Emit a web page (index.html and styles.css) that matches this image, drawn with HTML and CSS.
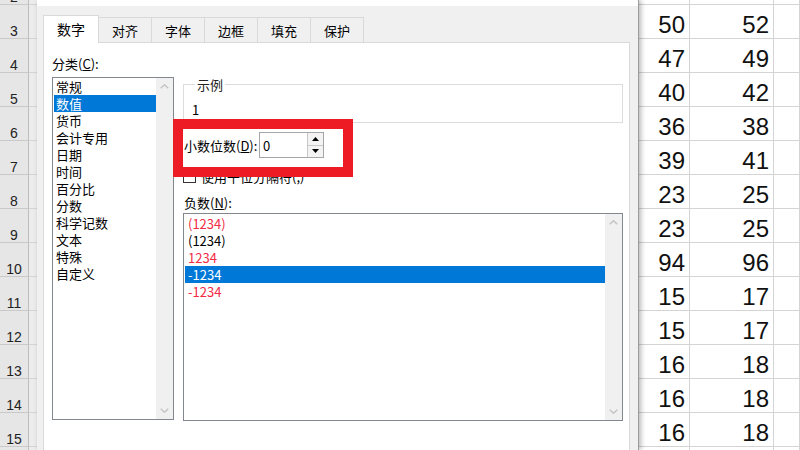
FILE: index.html
```html
<!DOCTYPE html>
<html lang="zh-CN">
<head>
<meta charset="utf-8">
<title>设置单元格格式</title>
<link rel="stylesheet" href="styles.css">
</head>
<body>
<div class="sheet">
  <div class="row"><div class="rh">2</div><div class="c fill"></div><div class="c num"></div><div class="c num"></div><div class="c last"></div></div>
  <div class="row"><div class="rh">3</div><div class="c fill"></div><div class="c num">50</div><div class="c num">52</div><div class="c last"></div></div>
  <div class="row"><div class="rh">4</div><div class="c fill"></div><div class="c num">47</div><div class="c num">49</div><div class="c last"></div></div>
  <div class="row"><div class="rh">5</div><div class="c fill"></div><div class="c num">40</div><div class="c num">42</div><div class="c last"></div></div>
  <div class="row"><div class="rh">6</div><div class="c fill"></div><div class="c num">36</div><div class="c num">38</div><div class="c last"></div></div>
  <div class="row"><div class="rh">7</div><div class="c fill"></div><div class="c num">39</div><div class="c num">41</div><div class="c last"></div></div>
  <div class="row"><div class="rh">8</div><div class="c fill"></div><div class="c num">23</div><div class="c num">25</div><div class="c last"></div></div>
  <div class="row"><div class="rh">9</div><div class="c fill"></div><div class="c num">23</div><div class="c num">25</div><div class="c last"></div></div>
  <div class="row"><div class="rh">10</div><div class="c fill"></div><div class="c num">94</div><div class="c num">96</div><div class="c last"></div></div>
  <div class="row"><div class="rh">11</div><div class="c fill"></div><div class="c num">15</div><div class="c num">17</div><div class="c last"></div></div>
  <div class="row"><div class="rh">12</div><div class="c fill"></div><div class="c num">15</div><div class="c num">17</div><div class="c last"></div></div>
  <div class="row"><div class="rh">13</div><div class="c fill"></div><div class="c num">16</div><div class="c num">18</div><div class="c last"></div></div>
  <div class="row"><div class="rh">14</div><div class="c fill"></div><div class="c num">16</div><div class="c num">18</div><div class="c last"></div></div>
  <div class="row"><div class="rh">15</div><div class="c fill"></div><div class="c num">16</div><div class="c num">18</div><div class="c last"></div></div>
  <div class="row"><div class="rh">16</div><div class="c fill"></div><div class="c num">16</div><div class="c num">18</div><div class="c last"></div></div>
</div>

<div class="dialog">
  <div class="titlebar"></div>
  <div class="dlg-body">
    <div class="tabs">
      <div class="tab active">数字</div>
      <div class="tab">对齐</div>
      <div class="tab">字体</div>
      <div class="tab">边框</div>
      <div class="tab">填充</div>
      <div class="tab">保护</div>
    </div>
    <div class="panel">
      <div class="cols">
        <div class="leftcol">
          <div class="lbl">分类(<u>C</u>):</div>
          <div class="listbox cat">
            <ul class="items">
              <li>常规</li>
              <li class="sel">数值</li>
              <li>货币</li>
              <li>会计专用</li>
              <li>日期</li>
              <li>时间</li>
              <li>百分比</li>
              <li>分数</li>
              <li>科学记数</li>
              <li>文本</li>
              <li>特殊</li>
              <li>自定义</li>
            </ul>
            <div class="vscroll">
              <div class="sbtn"><svg width="9" height="5" viewBox="0 0 9 5"><polyline points="0.7,4.3 4.5,0.8 8.3,4.3" fill="none" stroke="#c4c4c4" stroke-width="1.5"/></svg></div>
              <div class="sbtn"><svg width="9" height="5" viewBox="0 0 9 5"><polyline points="0.7,0.7 4.5,4.2 8.3,0.7" fill="none" stroke="#c4c4c4" stroke-width="1.5"/></svg></div>
            </div>
          </div>
        </div>
        <div class="rightcol">
          <fieldset class="sample">
            <legend>示例</legend>
            <div class="sample-val">1</div>
          </fieldset>
          <div class="decimal">
            <span class="dlabel">小数位数(<u>D</u>):</span>
            <div class="spin">
              <span class="spin-val">0</span>
              <div class="spin-btns">
                <div class="sb"><svg width="7" height="4" viewBox="0 0 7 4"><polygon points="0,4 3.5,0 7,4" fill="#000"/></svg></div>
                <div class="sb"><svg width="7" height="4" viewBox="0 0 7 4"><polygon points="0,0 3.5,4 7,0" fill="#000"/></svg></div>
              </div>
            </div>
          </div>
          <div class="check"><span class="cbox"></span><span>使用千位分隔符(<u>,</u>)</span></div>
          <div class="lbl neg-lbl">负数(<u>N</u>):</div>
          <div class="listbox neg">
            <ul class="items">
              <li class="red">(1234)</li>
              <li>(1234)</li>
              <li class="red">1234</li>
              <li class="sel">-1234</li>
              <li class="red">-1234</li>
            </ul>
            <div class="vscroll">
              <div class="sbtn"><svg width="9" height="5" viewBox="0 0 9 5"><polyline points="0.7,4.3 4.5,0.8 8.3,4.3" fill="none" stroke="#c4c4c4" stroke-width="1.5"/></svg></div>
              <div class="sbtn"><svg width="9" height="5" viewBox="0 0 9 5"><polyline points="0.7,0.7 4.5,4.2 8.3,0.7" fill="none" stroke="#c4c4c4" stroke-width="1.5"/></svg></div>
            </div>
          </div>
        </div>
      </div>
      <p class="desc">数值格式用于一般数字的表示。货币和会计格式则提供货币值计算的专用格式。</p>
    </div>
  </div>
</div>

<div class="mark"></div>
</body>
</html>
```

FILE: styles.css
```css
* { box-sizing: border-box; }
html, body { margin: 0; padding: 0; }
body {
  width: 800px;
  height: 450px;
  overflow: hidden;
  position: relative;
  background: #fff;
  font-family: "Noto Sans CJK SC", "Liberation Sans", sans-serif;
}

/* spreadsheet */
.sheet { margin-top: -29px; }
.row {
  display: grid;
  grid-template-columns: 29px 577px 84px 84px 1fr;
  height: 34px;
}
.rh {
  background: #e6e6e6;
  border-right: 1px solid #bdbdbd;
  border-bottom: 1px solid #c9c9c9;
  font-family: "Liberation Sans", sans-serif;
  font-size: 14px;
  line-height: 14px;
  color: #222;
  text-align: center;
  padding-top: 19px;
}
.c {
  border-right: 1px solid #d4d4d4;
  border-bottom: 1px solid #d4d4d4;
}
.fill { background: #ececec; }
.num {
  font-family: "Liberation Sans", sans-serif;
  font-size: 24px;
  line-height: 24px;
  color: #111;
  text-align: right;
  padding: 8px 4px 0 0;
}

/* dialog */
.dialog {
  position: absolute;
  left: 37px;
  top: 0;
  width: 602px;
  height: 450px;
  overflow: hidden;
  background: #f0f0f0;
  border-right: 1px solid #9c9c9c;
  box-shadow: 2px 0 5px rgba(0, 0, 0, 0.28);
  font-size: 13px;
  color: #000;
}
.titlebar { height: 6px; background: #fff; }
.dlg-body { padding: 9px 0 0 6px; }

.tabs {
  display: flex;
  align-items: flex-end;
  height: 27px;
}
.tab {
  width: 54px;
  height: 25px;
  margin-left: -1px;
  border: 1px solid #d9d9d9;
  border-bottom: none;
  background: #f0f0f0;
  display: flex;
  align-items: center;
  justify-content: center;
  line-height: 17px;
  padding-top: 1px;
}
.tab.active {
  width: 56px;
  height: 28px;
  margin-left: 0;
  margin-bottom: -1px;
  background: #fff;
  position: relative;
  z-index: 1;
  font-size: 14px;
  padding-top: 0;
}

.panel {
  width: 587px;
  height: 420px;
  background: #fff;
  border: 1px solid #d9d9d9;
  padding: 12px 0 0 8px;
}
.cols {
  display: grid;
  grid-template-columns: 122px 440px;
  column-gap: 9px;
}
.lbl { line-height: 17px; }
.leftcol .lbl { margin-bottom: 5px; }
u { text-decoration: underline; text-underline-offset: 1px; }

.listbox {
  border: 1px solid #828790;
  background: #fff;
  display: flex;
}
.listbox.cat { height: 343px; }
.listbox.neg { height: 208px; }
.items {
  list-style: none;
  margin: 0;
  padding: 0 0 0 1px;
  flex: 1;
}
.items li {
  height: 17px;
  line-height: 17px;
  padding-left: 2px;
  white-space: nowrap;
}
.items li.sel { background: #0078d7; color: #fff; }
.items li.red { color: #f22a45; }
.neg .items { padding-top: 1px; }
.neg .items li { padding-left: 3px; }

.vscroll {
  width: 17px;
  background: #f0f0f0;
  display: flex;
  flex-direction: column;
  justify-content: space-between;
}
.sbtn {
  height: 17px;
  display: flex;
  align-items: center;
  justify-content: center;
}

.rightcol { padding-top: 21px; }
.sample {
  margin: 0;
  padding: 0 0 4px 8px;
  border: 1px solid #dcdcdc;
  min-width: 0;
}
.sample legend {
  padding: 0 2px;
  margin-left: 3px;
  line-height: 17px;
  color: #222;
}
.sample-val { line-height: 17px; margin-top: 8px; }

.decimal {
  display: flex;
  align-items: center;
  margin-top: 9px;
  height: 26px;
}
.dlabel { width: 76px; padding-left: 1px; line-height: 17px; white-space: nowrap; }
.spin {
  width: 65px;
  height: 26px;
  border: 1px solid #a6a6a6;
  display: flex;
  align-items: center;
  justify-content: space-between;
}
.spin-val { padding-left: 3px; line-height: 17px; }
.spin-btns {
  width: 16px;
  height: 24px;
  display: flex;
  flex-direction: column;
  border-left: 1px solid #c8c8c8;
}
.sb {
  flex: 1;
  background: #f3f3f3;
  display: flex;
  align-items: center;
  justify-content: center;
}
.sb + .sb { border-top: 1px solid #c8c8c8; }

.check {
  display: flex;
  align-items: center;
  gap: 5px;
  margin-top: 10px;
  line-height: 17px;
}
.cbox {
  width: 13px;
  height: 13px;
  border: 1px solid #333;
  background: #fff;
}
.neg-lbl { margin-top: 9px; margin-bottom: 2px; padding-left: 1px; }

.desc {
  margin: 26px 0 0 14px;
  line-height: 17px;
  color: #222;
}

/* red annotation frame drawn over the dialog */
.mark {
  position: absolute;
  left: 173px;
  top: 119px;
  width: 180px;
  height: 58px;
  border: 10px solid #ed1c24;
}
```
